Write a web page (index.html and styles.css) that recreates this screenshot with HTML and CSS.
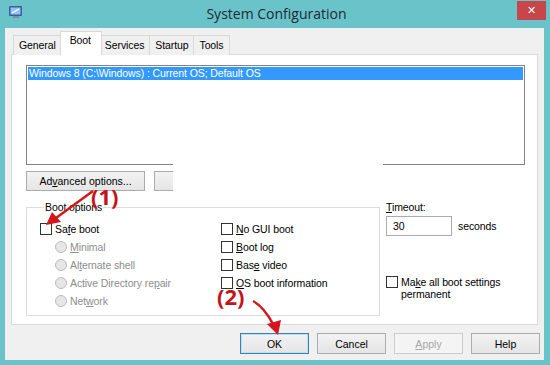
FILE: index.html
```html
<!DOCTYPE html>
<html lang="en">
<head>
  <meta charset="UTF-8">
  <title>System Configuration</title>
  <link rel="stylesheet" href="styles.css">
</head>
<body>
  <div class="frame">
    <div class="titlebar">
      <svg class="app-icon" width="16" height="16" viewBox="0 0 16 16">
        <rect x="1" y="2" width="13" height="10" rx="1" fill="#3b5f9e"/>
        <rect x="2.5" y="3.5" width="10" height="7" fill="#8fc3f0"/>
        <path d="M4 9 L11 5" stroke="#ffffff" stroke-width="1.2"/>
        <rect x="5" y="12" width="6" height="2" fill="#7d8fa8"/>
      </svg>
      <div class="title">System Configuration</div>
      <div class="close">&#x2715;</div>
    </div>

    <div class="window">
      <div class="tabs">
        <div class="tab">General</div>
        <div class="tab active">Boot</div>
        <div class="tab">Services</div>
        <div class="tab">Startup</div>
        <div class="tab">Tools</div>
      </div>

      <div class="panel">
        <div class="listbox">
          <div class="list-item selected">Windows 8 (C:\Windows) : Current OS; Default OS</div>
        </div>

        <div class="list-buttons">
          <button class="btn wide">Ad<u>v</u>anced options...</button>
          <button class="btn wide">Set as default</button>
        </div>

        <div class="options-row">
          <fieldset class="group">
            <legend>Boot options</legend>
            <div class="group-cols">
              <div class="col">
                <label class="opt"><span class="check"></span><span>Sa<u>f</u>e boot</span></label>
                <label class="opt sub disabled"><span class="radio"></span><span><u>M</u>inimal</span></label>
                <label class="opt sub disabled"><span class="radio"></span><span>Al<u>t</u>ernate shell</span></label>
                <label class="opt sub disabled"><span class="radio"></span><span>Active Directory re<u>p</u>air</span></label>
                <label class="opt sub disabled"><span class="radio"></span><span>Net<u>w</u>ork</span></label>
              </div>
              <div class="col">
                <label class="opt"><span class="check"></span><span><u>N</u>o GUI boot</span></label>
                <label class="opt"><span class="check"></span><span><u>B</u>oot log</span></label>
                <label class="opt"><span class="check"></span><span>Bas<u>e</u> video</span></label>
                <label class="opt"><span class="check"></span><span><u>O</u>S boot information</span></label>
              </div>
            </div>
          </fieldset>

          <div class="side">
            <div class="timeout-label"><u>T</u>imeout:</div>
            <div class="timeout-row">
              <div class="textbox">30</div>
              <span>seconds</span>
            </div>
            <label class="opt permanent"><span class="check"></span><span>Ma<u>k</u>e all boot settings<br>permanent</span></label>
          </div>
        </div>
      </div>

      <div class="dialog-buttons">
        <button class="btn default">OK</button>
        <button class="btn">Cancel</button>
        <button class="btn disabled"><u>A</u>pply</button>
        <button class="btn">Help</button>
      </div>
    </div>

    <div class="blank-patch"></div>

    <div class="note note-1">(1)</div>
    <div class="note note-2">(2)</div>
    <svg class="arrows" width="550" height="365" viewBox="0 0 550 365">
      <path d="M93 191 L56 218" stroke="#d3171d" stroke-width="2.5" fill="none"/>
      <polygon points="46,225 52,212 61,222" fill="#d3171d"/>
      <path d="M253 301 Q264 307 273 324" stroke="#d3171d" stroke-width="2.5" fill="none"/>
      <polygon points="278,335 267,324 281,320" fill="#d3171d"/>
    </svg>
  </div>
</body>
</html>
```

FILE: styles.css
```css
* {
  box-sizing: border-box;
}

body {
  margin: 0;
  background: #6bc3ca;
  font-family: "Liberation Sans", Arial, sans-serif;
  font-size: 10.5px;
  letter-spacing: -0.1px;
  color: #000;
}

.frame {
  position: relative;
  width: 550px;
  height: 365px;
  overflow: hidden;
  background: #6bc3ca;
}

.titlebar {
  height: 28px;
  display: flex;
  align-items: center;
  padding: 0 4px 0 8px;
}

.app-icon {
  margin-top: -4px;
}

.title {
  flex: 1;
  text-align: center;
  font-family: "Open Sans", sans-serif;
  font-size: 14px;
  letter-spacing: 0;
  color: #1b2a33;
  margin-top: -2px;
  padding-left: 12px;
}

.close {
  width: 29px;
  height: 19px;
  margin-top: -7px;
  background: #c74649;
  color: #fff;
  font-size: 11px;
  display: flex;
  align-items: center;
  justify-content: center;
}

.window {
  margin: 0 6px 0 5px;
  height: 332px;
  background: #f0f0f0;
  padding: 5px 0 0 6px;
}

/* tabs */
.tabs {
  display: flex;
  height: 22px;
  align-items: flex-end;
  padding-left: 3px;
  position: relative;
  z-index: 1;
}

.tab {
  height: 20px;
  padding: 0 5px;
  border: 1px solid #d9d9d9;
  border-bottom: none;
  margin-left: -1px;
  background: #f0f0f0;
  line-height: 19px;
}

.tab.active {
  height: 24px;
  background: #fff;
  margin-left: -2px;
  margin-right: -2px;
  padding: 0 10px 0 9px;
  line-height: 17px;
  position: relative;
  z-index: 2;
}

.panel {
  width: 527px;
  height: 271px;
  margin-top: -1px;
  background: #fff;
  border: 1px solid #d9d9d9;
  padding: 10px 12px 0 14px;
}

.listbox {
  height: 100px;
  border: 1px solid #838383;
  padding: 1px;
}

.list-item {
  height: 13px;
  line-height: 13px;
  padding-left: 1px;
}

.list-item.selected {
  background: #3399ff;
  color: #fff;
}

.list-buttons {
  display: flex;
  gap: 9px;
  margin-top: 6px;
}

.btn {
  height: 21px;
  width: 69px;
  font-family: inherit;
  font-size: 10.5px;
  color: #000;
  background: linear-gradient(#f2f2f2, #e5e5e5);
  border: 1px solid #acacac;
  padding: 0;
}

.btn.wide {
  width: 119px;
  height: 20px;
}

.btn.default {
  border-color: #3c7fb1;
  box-shadow: inset 0 0 0 1px #bde0f7;
}

.btn.disabled {
  color: #a8a8a8;
  background: #f4f4f4;
  border-color: #cccccc;
}

.options-row {
  display: flex;
  gap: 6px;
  margin-top: 9px;
}

.group {
  width: 354px;
  height: 116px;
  margin: 0;
  border: 1px solid #dcdcdc;
  padding: 7px 0 0 13px;
}

.group legend {
  padding: 0 1px;
  margin-left: 4px;
  line-height: 14px;
}

.group-cols {
  display: grid;
  grid-template-columns: 181px 1fr;
}

.col {
  display: flex;
  flex-direction: column;
  gap: 3px;
}

.opt {
  display: flex;
  align-items: center;
  gap: 3px;
  height: 15px;
}

.opt.sub {
  padding-left: 15px;
}

.opt.disabled {
  color: #8d8d8d;
}

.check {
  width: 12px;
  height: 12px;
  border: 1px solid #333;
  background: #fff;
  flex: none;
}

.radio {
  width: 12px;
  height: 12px;
  border-radius: 50%;
  border: 1px solid #bcbcbc;
  background: #e6e6e6;
  flex: none;
}

.timeout-label {
  line-height: 12px;
  margin-top: 1px;
}

.timeout-row {
  display: flex;
  align-items: center;
  gap: 6px;
  margin-top: 3px;
}

.textbox {
  width: 66px;
  height: 20px;
  border: 1px solid #acacac;
  padding-left: 6px;
  line-height: 18px;
}

.opt.permanent {
  align-items: flex-start;
  margin-top: 40px;
  line-height: 12px;
  height: auto;
}

.dialog-buttons {
  display: flex;
  justify-content: flex-end;
  gap: 8px;
  width: 529px;
  margin-top: 8px;
}

/* blanked-out area over the dialog */
.blank-patch {
  position: absolute;
  left: 173px;
  top: 142px;
  width: 210px;
  height: 58px;
  background: #fff;
}

.note {
  position: absolute;
  font-family: "Open Sans", sans-serif;
  font-weight: 700;
  font-size: 22px;
  letter-spacing: 0;
  color: #c4141b;
  line-height: 22px;
}

.note-1 {
  left: 91px;
  top: 185px;
}

.note-2 {
  left: 217px;
  top: 285px;
}

.arrows {
  position: absolute;
  left: 0;
  top: 0;
}
```
